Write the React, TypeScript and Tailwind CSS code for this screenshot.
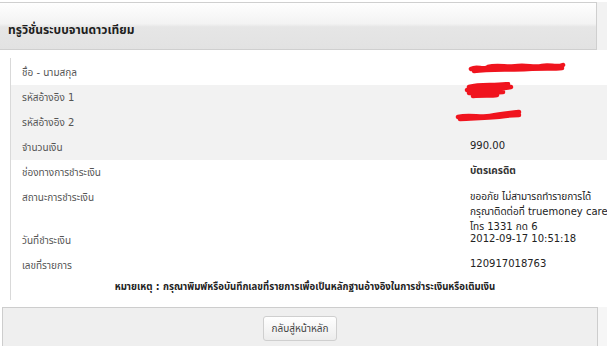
import React, { FC } from 'react';

interface IRow {
  label: string,
  value?: React.ReactNode,
  gray?: boolean,
  tall?: boolean,
  bold?: boolean,
}

const Scribble: FC<{ w: number, h: number, d: string }> = ({ w, h, d }) => (
  <svg width={w} height={h} viewBox={`0 0 ${w} ${h}`} className="block">
    <path d={d} fill="none" stroke="#f0141e" strokeWidth="4.5" strokeLinecap="round" strokeLinejoin="round" />
  </svg>
);

const rows: IRow[] = [
  {
    label: 'ชื่อ - นามสกุล',
    value: (
      <div className="-mt-[3px] -ml-[2px]">
        <Scribble w={98} h={14} d="M3 9 C10 5 14 11 20 7 C30 4 40 8 50 6 C60 5 66 8 74 6 C82 4 88 8 95 5 M6 11 C20 9 40 10 60 9 C75 8 85 9 94 8" />
      </div>
    ),
  },
  {
    label: 'รหัสอ้างอิง 1',
    gray: true,
    value: (
      <div className="-mt-[6px] ml-[-7px]">
        <Scribble w={52} h={18} d="M6 5 C18 2 30 4 45 2 M4 8 C18 6 30 8 48 5 M6 11 C18 9 26 11 40 10 M10 14 C20 13 28 14 34 13" />
      </div>
    ),
  },
  {
    label: 'รหัสอ้างอิง 2',
    gray: true,
    value: (
      <div className="-mt-[5px] ml-[-15px]">
        <Scribble w={68} h={15} d="M3 9 C15 6 25 10 35 8 C45 6 55 5 64 4 M5 11 C20 10 35 10 50 8 C56 7 60 7 64 7" />
      </div>
    ),
  },
  { label: 'จำนวนเงิน', value: '990.00', gray: true },
  { label: 'ช่องทางการชำระเงิน', value: 'บัตรเครดิต', bold: true },
  {
    label: 'สถานะการชำระเงิน',
    tall: true,
    value: (
      <div className="leading-[15px] pt-[1px]">
        <div>ขออภัย ไม่สามารถทำรายการได้</div>
        <div>กรุณาติดต่อที่ truemoney care</div>
        <div>โทร 1331 กด 6</div>
      </div>
    ),
  },
  { label: 'วันที่ชำระเงิน', value: '2012-09-17 10:51:18' },
  { label: 'เลขที่รายการ', value: '120917018763' },
];

const App: FC = () => (
  <div
    className="w-[607px] h-[346px] overflow-hidden bg-white text-[10px] text-[#222] flex flex-col"
    style={{ fontFamily: 'Tahoma, "DejaVu Sans", "Noto Sans Thai", sans-serif' }}
  >
    <div className="h-[2px] shrink-0 bg-white" />
    <div className="flex shrink-0">
      <div className="w-[597px] h-[48px] border-t border-b border-r border-[#cfcfcf] bg-[linear-gradient(to_bottom,#fefefe_0%,#f3f3f3_45%,#e6e6e6_52%,#e2e2e2_100%)] flex items-end pb-[10px] pl-[8px]">
        <span className="text-[12px] font-bold text-[#1e1e1e]">ทรูวิชั่นระบบจานดาวเทียม</span>
      </div>
      <div className="flex-1 bg-[#f2f2f2]" />
    </div>
    <div className="flex-1 pt-[8px] pl-[10px] pb-[7px]">
      <div className="h-full border-l border-[#d9d9d9] flex flex-col pt-[2px]">
        {rows.map((r) => (
          <div
            key={r.label}
            className={`flex ${r.tall ? 'h-[43px]' : 'h-[25px]'} ${r.gray ? 'bg-[#f2f2f2]' : ''}`}
          >
            <div className="w-[459px] shrink-0 pl-[11px] pt-[5px] leading-[15px] text-[#555]">{r.label}</div>
            <div className={`pt-[3px] leading-[15px] whitespace-nowrap ${r.bold ? 'font-bold text-[#333]' : ''}`}>
              {r.value}
            </div>
          </div>
        ))}
        <div className="text-center font-bold text-[9.6px] leading-[15px] pr-[8px] pt-[1px]">
          หมายเหตุ : กรุณาพิมพ์หรือบันทึกเลขที่รายการเพื่อเป็นหลักฐานอ้างอิงในการชำระเงินหรือเติมเงิน
        </div>
      </div>
    </div>
    <div className="flex h-[39px] shrink-0">
      <div className="w-[596px] ml-[2px] border-t border-l border-r border-[#cdcdcd] bg-[#efefef] flex justify-center pt-[8px]">
        <button
          type="button"
          className="h-[25px] px-[7px] border border-[#cfcfcf] rounded-[3px] bg-[linear-gradient(to_bottom,#ffffff,#ececec)] text-[10px] text-[#444] leading-none"
        >
          กลับสู่หน้าหลัก
        </button>
      </div>
      <div className="flex-1 bg-[#f6f6f6]" />
    </div>
  </div>
);

export default App;
